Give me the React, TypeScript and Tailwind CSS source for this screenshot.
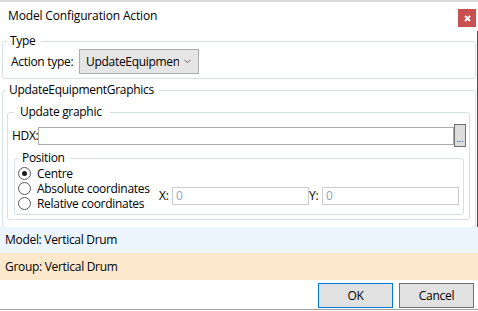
import React from 'react'

function Radio({ label, checked }: { label: string; checked?: boolean }) {
  return (
    <div className="flex h-[15px] items-center gap-[6px] leading-[15px]">
      <span className="flex h-[13px] w-[13px] items-center justify-center rounded-full border border-[#5a5a5a] bg-white">
        {checked && <span className="h-[5px] w-[5px] rounded-full bg-[#1a1a1a]" />}
      </span>
      <span>{label}</span>
    </div>
  )
}

function Coord({ value }: { value: string }) {
  return (
    <div className="flex h-[18px] w-[137px] items-center border border-[#cccccc] bg-white pl-[3px] text-[#8ea3bf]">
      {value}
    </div>
  )
}

export default function App() {
  return (
    <div className="flex h-[311px] w-[478px] flex-col border-t-2 border-[#dadada] bg-white font-['Open_Sans',sans-serif] text-[12px] leading-[16px] tracking-[-0.3px] text-black">
      {/* title bar */}
      <div className="flex h-[29px] items-start justify-between pl-[8px] pr-[2px]">
        <span className="mt-[6px] tracking-[-0.15px]">Model Configuration Action</span>
        <button className="mt-[7px] flex h-[18px] w-[18px] items-center justify-center bg-[#c75050]">
          <svg width="7" height="7" viewBox="0 0 7 7">
            <path d="M1 1 L6 6 M6 1 L1 6" stroke="#fff" strokeWidth="1.8" />
          </svg>
        </button>
      </div>

      {/* content */}
      <div className="flex h-[196px] flex-col border-r border-[#4d4d4d]">
        <fieldset className="ml-[2px] mr-[1px] mt-[2px] rounded-[3px] border border-[#d5dfe5] pb-[4px] pl-[4px]">
          <legend className="pl-[3px] pr-[5px]">Type</legend>
          <div className="flex items-center pl-[4px]">
            <span className="w-[68px]">Action type:</span>
            <div className="flex h-[25px] w-[120px] items-center justify-between border border-[#acacac] bg-[#e5e5e5] pl-[6px] pr-[7px]">
              <span className="w-[93px] overflow-hidden whitespace-nowrap">UpdateEquipmen</span>
              <svg width="7" height="5" viewBox="0 0 7 5">
                <path d="M0.5 0.8 L3.5 3.8 L6.5 0.8" fill="none" stroke="#606060" strokeWidth="1" />
              </svg>
            </div>
          </div>
        </fieldset>

        <fieldset className="ml-[2px] mr-[1px] mt-[3px] rounded-[3px] border border-[#d5dfe5] pb-[7px] pl-[4px] pr-[5px]">
          <legend className="-ml-[1px] pl-[3px] pr-[5px]">UpdateEquipmentGraphics</legend>

          <fieldset className="mt-[6px] rounded-[3px] border border-[#d5dfe5] pb-[4px] pl-[4px] pr-[3px]">
            <legend className="ml-[2px] pl-[6px] pr-[8px]">Update graphic</legend>

            <div className="mt-[4px] flex h-[23px] items-center">
              <span className="w-[26px]">HDX:</span>
              <div className="h-[18px] w-[416px] border border-[#ababab] bg-white" />
              <button className="flex h-[23px] w-[12px] items-end justify-center border border-[#707070] bg-[#dddddd] pb-[3px] text-[9px] leading-[9px] tracking-normal text-[#333]">
                ...
              </button>
            </div>

            <fieldset className="ml-[2px] mr-[2px] mt-[3px] rounded-[3px] border border-[#d5dfe5] pb-[3px] pl-[3px] pr-[4px]">
              <legend className="pl-[4px] pr-[5px]">Position</legend>
              <div className="flex">
                <div className="flex w-[141px] flex-col">
                  <Radio label="Centre" checked />
                  <Radio label="Absolute coordinates" />
                  <Radio label="Relative coordinates" />
                </div>
                <div className="flex h-[30px] items-center self-end">
                  <span className="w-[13px]">X:</span>
                  <Coord value="0" />
                  <span className="w-[13px]">Y:</span>
                  <Coord value="0" />
                </div>
              </div>
            </fieldset>
          </fieldset>
        </fieldset>
      </div>

      {/* info bands */}
      <div className="flex h-[26px] items-center bg-[#edf5fe] pl-[5px]">Model: Vertical Drum</div>
      <div className="flex h-[27px] items-center bg-[#fee9cc] pl-[5px]">Group: Vertical Drum</div>

      {/* buttons */}
      <div className="flex h-[29px] items-start justify-end gap-[6px] pr-[4px] pt-[3px]">
        <button className="h-[25px] w-[75px] border border-[#0078d7] bg-[#e1e1e1]">OK</button>
        <button className="h-[25px] w-[75px] border border-[#707070] bg-[#e1e1e1]">Cancel</button>
      </div>
      <div className="h-[1px] bg-[#a0a0a0]" />
    </div>
  )
}
